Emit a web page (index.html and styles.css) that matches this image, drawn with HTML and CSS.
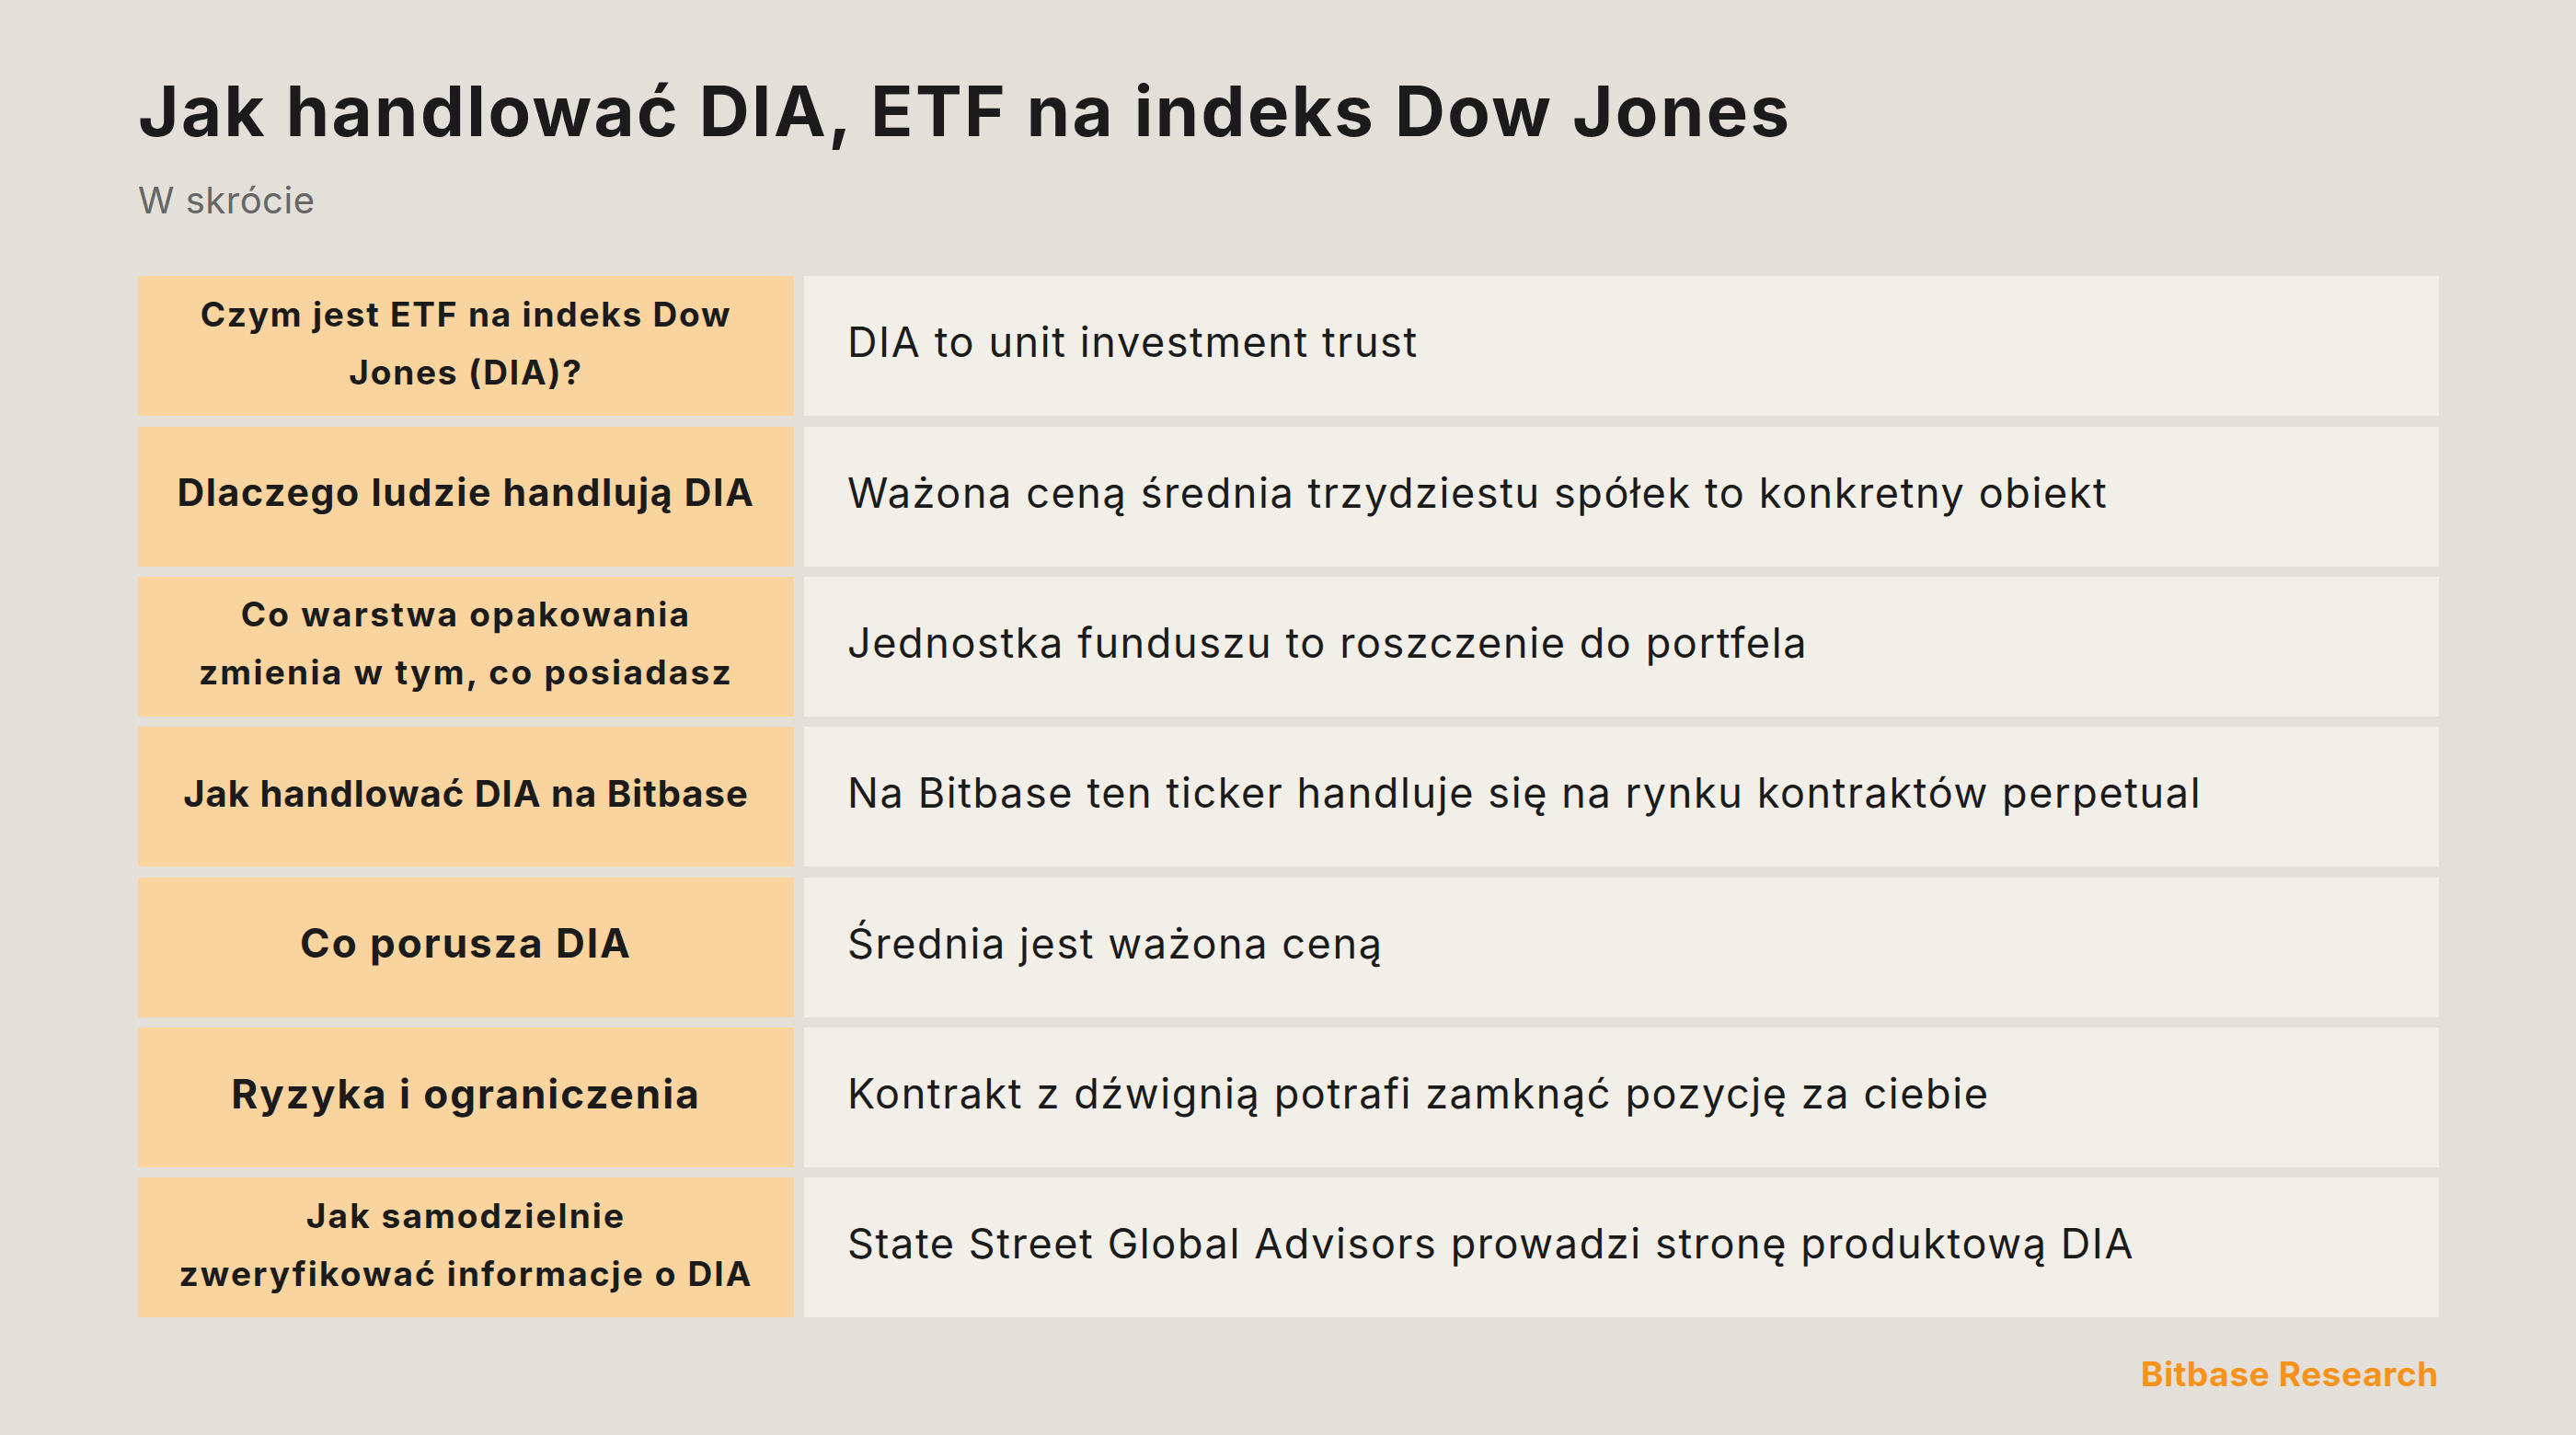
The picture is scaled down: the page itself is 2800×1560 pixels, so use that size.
FILE: index.html
```html
<!DOCTYPE html>
<html lang="pl">
<head>
<meta charset="utf-8">
<title>Jak handlować DIA, ETF na indeks Dow Jones</title>
<link rel="stylesheet" href="styles.css">
</head>
<body>
<main class="page">
  <h1 class="title">Jak handlować DIA, ETF na indeks Dow Jones</h1>
  <p class="subtitle">W skrócie</p>
  <section class="table">
    <div class="key k-sm">Czym jest ETF na indeks Dow<br>Jones (DIA)?</div>
    <div class="val">DIA to unit investment trust</div>
    <div class="key k-md">Dlaczego ludzie handlują DIA</div>
    <div class="val">Ważona ceną średnia trzydziestu spółek to konkretny obiekt</div>
    <div class="key k-sm k-wide">Co warstwa opakowania<br>zmienia w tym, co posiadasz</div>
    <div class="val">Jednostka funduszu to roszczenie do portfela</div>
    <div class="key k-md2">Jak handlować DIA na Bitbase</div>
    <div class="val">Na Bitbase ten ticker handluje się na rynku kontraktów perpetual</div>
    <div class="key k-lg">Co porusza DIA</div>
    <div class="val">Średnia jest ważona ceną</div>
    <div class="key k-lg">Ryzyka i ograniczenia</div>
    <div class="val">Kontrakt z dźwignią potrafi zamknąć pozycję za ciebie</div>
    <div class="key k-sm k-wide2">Jak samodzielnie<br>zweryfikować informacje o DIA</div>
    <div class="val">State Street Global Advisors prowadzi stronę produktową DIA</div>
  </section>
  <footer class="brand">Bitbase Research</footer>
</main>
</body>
</html>
```
FILE: styles.css
```css
* { box-sizing: border-box; }
html, body {
  margin: 0;
  padding: 0;
  width: 2800px;
  height: 1560px;
  background: #e3dfd9;
  overflow: hidden;
}
body {
  font-family: "Inter", "Noto Sans", "DejaVu Sans", sans-serif;
  color: #1b1b1b;
}
.page {
  display: flex;
  flex-direction: column;
  padding: 75px 149px 0 150px;
}
.title {
  margin: 0;
  font-size: 76px;
  line-height: 1.2;
  font-weight: 700;
  letter-spacing: 2.5px;
  color: #1b1b1b;
}
.subtitle {
  margin: 28px 0 0;
  font-size: 40px;
  line-height: 1.2;
  font-weight: 400;
  letter-spacing: 0.5px;
  color: #666666;
}
.table {
  margin-top: 58px;
  display: grid;
  grid-template-columns: 713px 1fr;
  grid-auto-rows: 152px;
  column-gap: 11px;
  row-gap: 11.33px;
}
.key {
  background: #f9d49e;
  display: flex;
  align-items: center;
  justify-content: center;
  text-align: center;
  font-weight: 700;
  padding: 0 20px 7px;
  letter-spacing: 1.8px;
}
.k-sm { font-size: 37px; line-height: 63px; }
.k-wide { letter-spacing: 2.3px; }
.k-wide2 { letter-spacing: 2.1px; }
.k-md { font-size: 41px; line-height: 1.3; letter-spacing: 1.7px; }
.k-md2 { font-size: 40px; line-height: 1.3; letter-spacing: 1px; }
.k-lg { font-size: 44px; line-height: 1.3; letter-spacing: 2px; }
.val {
  background: #f2efe8;
  display: flex;
  align-items: center;
  padding: 0 47px 7px;
  font-size: 45px;
  line-height: 1.3;
  font-weight: 400;
  letter-spacing: 1.6px;
}
.brand {
  margin-top: 40px;
  align-self: flex-end;
  font-size: 37px;
  line-height: 1.2;
  font-weight: 700;
  letter-spacing: 0.6px;
  color: #f7931a;
}
```
